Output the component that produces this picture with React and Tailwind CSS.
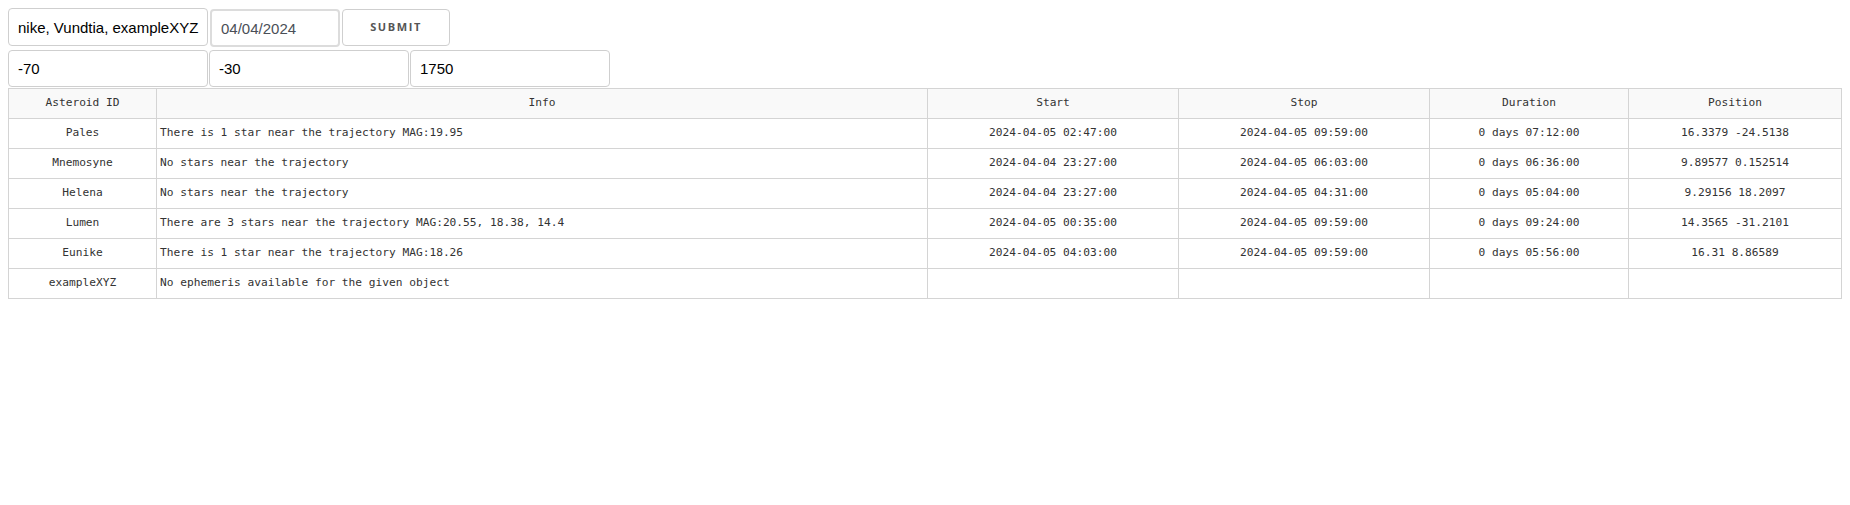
import React, { useState } from 'react';

const rows = [
  { id: 'Pales', info: 'There is 1 star near the trajectory MAG:19.95', start: '2024-04-05 02:47:00', stop: '2024-04-05 09:59:00', duration: '0 days 07:12:00', position: '16.3379 -24.5138' },
  { id: 'Mnemosyne', info: 'No stars near the trajectory', start: '2024-04-04 23:27:00', stop: '2024-04-05 06:03:00', duration: '0 days 06:36:00', position: '9.89577 0.152514' },
  { id: 'Helena', info: 'No stars near the trajectory', start: '2024-04-04 23:27:00', stop: '2024-04-05 04:31:00', duration: '0 days 05:04:00', position: '9.29156 18.2097' },
  { id: 'Lumen', info: 'There are 3 stars near the trajectory MAG:20.55, 18.38, 14.4', start: '2024-04-05 00:35:00', stop: '2024-04-05 09:59:00', duration: '0 days 09:24:00', position: '14.3565 -31.2101' },
  { id: 'Eunike', info: 'There is 1 star near the trajectory MAG:18.26', start: '2024-04-05 04:03:00', stop: '2024-04-05 09:59:00', duration: '0 days 05:56:00', position: '16.31 8.86589' },
  { id: 'exampleXYZ', info: 'No ephemeris available for the given object', start: '', stop: '', duration: '', position: '' },
];

const inputCls =
  "w-[200px] h-[37px] rounded-[4px] border border-[#cfcfcf] bg-white pl-[9px] pr-[4px] text-[15px] text-black outline-none font-['Liberation_Sans',Arial,sans-serif]";

const App = () => {
  const [ids, setIds] = useState('nike, Vundtia, exampleXYZ');
  const [date, setDate] = useState('04/04/2024');
  const [ra, setRa] = useState('-70');
  const [dec, setDec] = useState('-30');
  const [alt, setAlt] = useState('1750');

  return (
    <div className="min-h-screen bg-white p-2">
      {/* Query form */}
      <div className="flex items-start gap-[2px]">
        <input className={`${inputCls} h-[38px]`} value={ids} onChange={(e) => setIds(e.target.value)} />
        <input
          type="text"
          value={date}
          onChange={(e) => setDate(e.target.value)}
          className="mt-[1px] h-[38px] w-[130px] rounded-[4px] border-2 border-[#dcdcdc] bg-white px-[9px] text-[15px] text-[#4a4f57] outline-none font-['Liberation_Sans',Arial,sans-serif]"
        />
        <button className="mt-[1px] h-[37px] w-[108px] rounded-[4px] border border-[#cfcfcf] bg-white text-[11px] font-bold tracking-[1.6px] text-[#555] font-['Open_Sans',sans-serif]">
          SUBMIT
        </button>
      </div>
      <div className="mt-[3px] flex gap-[1px]">
        <input className={inputCls} value={ra} onChange={(e) => setRa(e.target.value)} />
        <input className={inputCls} value={dec} onChange={(e) => setDec(e.target.value)} />
        <input className={inputCls} value={alt} onChange={(e) => setAlt(e.target.value)} />
      </div>

      {/* Results */}
      <table className="mt-[1px] w-full table-fixed border-collapse text-[11.2px] text-[#333] font-['DejaVu_Sans_Mono',monospace]">
        <colgroup>
          <col className="w-[148px]" />
          <col className="w-[771px]" />
          <col className="w-[251px]" />
          <col className="w-[251px]" />
          <col className="w-[199px]" />
          <col />
        </colgroup>
        <thead>
          <tr className="bg-[#f9f9f9]">
            <th className="h-[30px] border border-[#d4d4d4] font-normal">Asteroid ID</th>
            <th className="h-[30px] border border-[#d4d4d4] font-normal">Info</th>
            <th className="h-[30px] border border-[#d4d4d4] font-normal">Start</th>
            <th className="h-[30px] border border-[#d4d4d4] font-normal">Stop</th>
            <th className="h-[30px] border border-[#d4d4d4] font-normal">Duration</th>
            <th className="h-[30px] border border-[#d4d4d4] font-normal">Position</th>
          </tr>
        </thead>
        <tbody>
          {rows.map((r) => (
            <tr key={r.id}>
              <td className="h-[30px] border border-[#d4d4d4] text-center">{r.id}</td>
              <td className="h-[30px] border border-[#d4d4d4] px-[3px] text-left">{r.info}</td>
              <td className="h-[30px] border border-[#d4d4d4] text-center">{r.start}</td>
              <td className="h-[30px] border border-[#d4d4d4] text-center">{r.stop}</td>
              <td className="h-[30px] border border-[#d4d4d4] text-center">{r.duration}</td>
              <td className="h-[30px] border border-[#d4d4d4] text-center">{r.position}</td>
            </tr>
          ))}
        </tbody>
      </table>
    </div>
  );
};

export default App;
